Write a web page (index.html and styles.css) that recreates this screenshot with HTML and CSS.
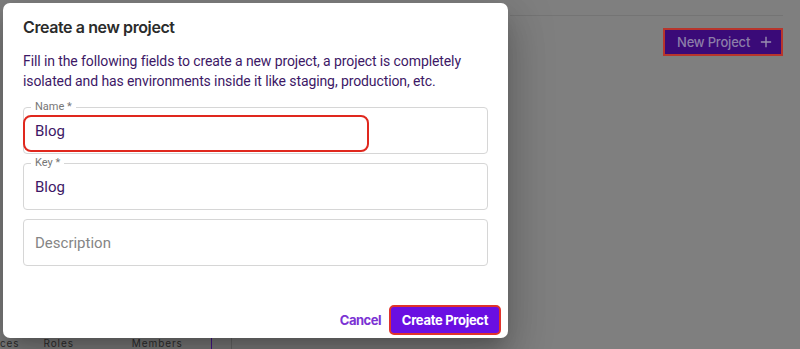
FILE: index.html
```html
<!DOCTYPE html>
<html>
<head>
<meta charset="utf-8">
<link rel="stylesheet" href="styles.css">
</head>
<body>
<div class="page">
  <div class="topline"></div>
  <div class="toolbar">
    <button class="new-project">New Project
      <svg class="plus" viewBox="0 0 14 14" width="12" height="12"><path d="M7 1v12M1 7h12" stroke="currentColor" stroke-width="1.6" fill="none"/></svg>
    </button>
  </div>
  <div class="tabs">
    <span class="tab t1">ces</span>
    <span class="tab t2">Roles</span>
    <span class="tab t3">Members</span>
    <span class="vbar purple"></span>
    <span class="vbar grey"></span>
  </div>
</div>

<div class="dialog">
  <h2 class="title">Create a new project</h2>
  <p class="desc">Fill in the following fields to create a new project, a project is completely isolated and has environments inside it like staging, production, etc.</p>
  <div class="fields">
    <div class="field">
      <span class="label">Name *</span>
      <span class="value">Blog</span>
      <span class="highlight"></span>
    </div>
    <div class="field">
      <span class="label">Key *</span>
      <span class="value">Blog</span>
    </div>
    <div class="field">
      <span class="placeholder">Description</span>
    </div>
  </div>
  <div class="actions">
    <button class="cancel">Cancel</button>
    <button class="create">Create Project</button>
  </div>
</div>
</body>
</html>
```
FILE: styles.css
```css
* { box-sizing: border-box; }
html, body { margin: 0; padding: 0; }
body {
  width: 800px;
  height: 349px;
  overflow: hidden;
  background: #7f7f7f;
  font-family: "Roboto", "Liberation Sans", sans-serif;
  position: relative;
}
.page {
  height: 349px;
  display: flex;
  flex-direction: column;
  background: #7f7f7f;
}
.topline {
  margin-left: 510px;
  width: 273px;
  height: 16px;
  border-bottom: 1px solid #747474;
}
.toolbar {
  display: flex;
  justify-content: flex-end;
  padding-right: 17px;
  margin-top: 12px;
}
.new-project {
  display: flex;
  align-items: center;
  gap: 10px;
  height: 28px;
  width: 120px;
  padding: 0 0 0 12px;
  white-space: nowrap;
  background: #3a0a78;
  border: 2px solid #b8352c;
  color: #8c7ea8;
  font-family: "Inter", sans-serif;
  font-size: 13px;
  letter-spacing: -0.2px;
  font-weight: 500;
}
.plus { color: #9a8fb0; }
.tabs {
  margin-top: auto;
  height: 12px;
  display: flex;
  align-items: flex-start;
  font-family: "Inter", sans-serif;
  font-size: 10px;
  letter-spacing: 0.9px;
  color: #2f2f2f;
}
.tab { line-height: 12px; white-space: nowrap; }
.t1 { margin-left: 0; }
.t2 { margin-left: 24px; }
.t3 { margin-left: 58px; }
.vbar { width: 1px; height: 12px; }
.vbar.purple { background: #4a1690; margin-left: 28px; width: 1.5px; }
.vbar.grey { background: #6b6b6b; margin-left: 19px; }

.dialog {
  position: absolute;
  left: 3px;
  top: 3px;
  width: 505px;
  height: 335px;
  background: #fff;
  border-radius: 7px;
  padding: 12px 20px 0;
  display: flex;
  flex-direction: column;
  box-shadow: 0 11px 15px -7px rgba(0,0,0,.2), 0 24px 38px 3px rgba(0,0,0,.14), 0 9px 46px 8px rgba(0,0,0,.12);
}
.title {
  margin: 0;
  font-family: "Inter", sans-serif;
  font-size: 16px;
  letter-spacing: -0.4px;
  font-weight: 600;
  line-height: 24px;
  color: #2b2b2b;
}
.desc {
  margin: 12px 0 0;
  font-size: 14px;
  letter-spacing: -0.1px;
  line-height: 20px;
  color: #3d1866;
}
.fields {
  margin-top: 16px;
  display: flex;
  flex-direction: column;
  gap: 9px;
}
.field {
  position: relative;
  height: 47px;
  border: 1px solid #d6d6d6;
  border-radius: 4px;
  display: flex;
  align-items: center;
  padding: 0 11px;
}
.label {
  position: absolute;
  left: 7px;
  top: -8px;
  padding: 0 4px;
  background: #fff;
  font-size: 11px;
  line-height: 14px;
  color: #767676;
}
.value {
  font-size: 15px;
  color: #3d1866;
}
.placeholder {
  font-size: 15px;
  color: #858585;
}
.highlight {
  position: absolute;
  left: -1px;
  top: 7px;
  width: 346px;
  height: 37px;
  border: 2px solid #e0281e;
  border-radius: 8px;
}
.actions {
  margin-top: auto;
  margin-bottom: 3px;
  display: flex;
  justify-content: flex-end;
  align-items: center;
  gap: 8px;
  margin-right: -13px;
}
.cancel {
  background: none;
  border: none;
  padding: 0;
  font-family: "Inter", sans-serif;
  font-size: 13px;
  letter-spacing: -0.5px;
  font-weight: 700;
  color: #7b33d4;
}
.create {
  height: 30px;
  width: 112px;
  background: #6a0fe2;
  border: 2px solid #e0332c;
  border-radius: 5px;
  color: #fff;
  font-family: "Inter", sans-serif;
  font-size: 13px;
  letter-spacing: -0.3px;
  font-weight: 700;
  padding: 0;
}
```
